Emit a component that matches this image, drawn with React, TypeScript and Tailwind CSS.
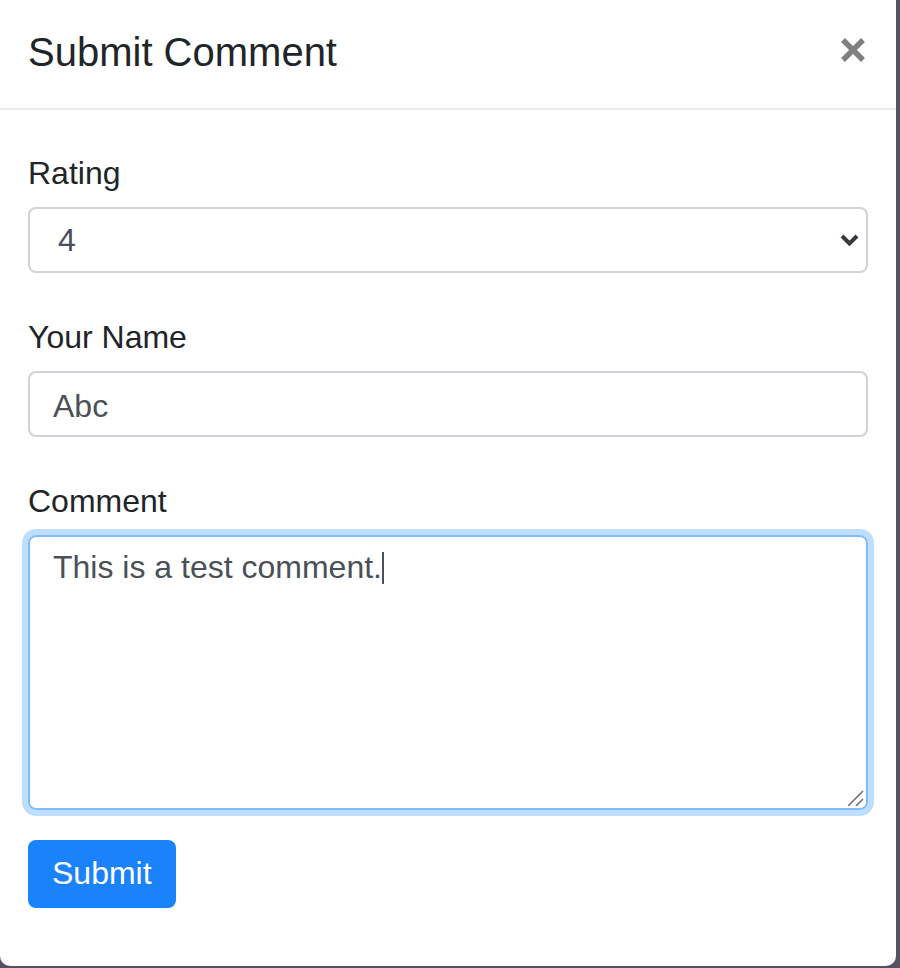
export default function App() {
  return (
    <div className="min-h-screen bg-[#54525e] font-['Liberation_Sans',Arial,sans-serif]">
      {/* Modal */}
      <div className="w-[896px] h-[966px] bg-white rounded-b-[10px] flex flex-col">
        {/* Header */}
        <div className="flex items-start justify-between pl-[28px] pr-[30px] pt-[22px] pb-[26px] border-b-2 border-[#e9ecef]">
          <h5 className="text-[40px] leading-[60px] text-[#212529] font-normal">Submit Comment</h5>
          <button className="mt-[15px] text-[#7f7f7f]" aria-label="Close">
            <svg width="26" height="26" viewBox="0 0 26 26">
              <path d="M3 3 L23 23 M23 3 L3 23" stroke="currentColor" strokeWidth="5.5" />
            </svg>
          </button>
        </div>

        {/* Body */}
        <div className="flex flex-col px-[28px] pt-[39px]">
          <label className="block text-[32px] leading-[48px] text-[#212529] mb-[10px]">Rating</label>
          <div className="relative">
            <select
              defaultValue="4"
              className="appearance-none w-full h-[66px] border-2 border-[#ced4da] rounded-[8px] pl-[28px] pr-[40px] text-[32px] text-[#495057] bg-white outline-none"
            >
              <option>1</option>
              <option>2</option>
              <option>3</option>
              <option>4</option>
              <option>5</option>
            </select>
            <svg
              className="absolute right-[9px] top-[27px] pointer-events-none"
              width="19"
              height="12"
              viewBox="0 0 19 12"
            >
              <polyline points="2,2 9.5,9.5 17,2" fill="none" stroke="#343a40" strokeWidth="4" />
            </svg>
          </div>

          <label className="block text-[32px] leading-[48px] text-[#212529] mt-[40px] mb-[10px]">Your Name</label>
          <input
            readOnly
            value="Abc"
            className="w-full h-[66px] border-2 border-[#ced4da] rounded-[8px] px-[23px] pt-[4px] text-[32px] text-[#495057] outline-none"
          />

          <label className="block text-[32px] leading-[48px] text-[#212529] mt-[40px] mb-[10px]">Comment</label>
          <div className="relative h-[275px] border-2 border-[#80bdff] rounded-[8px] shadow-[0_0_0_6px_#bfdeff] pt-[6px] px-[23px] text-[32px] leading-[48px] text-[#495057]">
            <span>This is a test comment.</span>
            <span className="inline-block w-[2px] h-[32px] bg-[#495057] align-[-6px]" />
            <svg className="absolute right-[2px] bottom-[2px]" width="16" height="16" viewBox="0 0 16 16">
              <path d="M0 16 L15 1 M8 16 L15 9" stroke="#6b6b6b" strokeWidth="1.5" />
            </svg>
          </div>

          <div className="mt-[30px]">
            <button className="h-[68px] px-[24px] pb-[2px] bg-[#1a82fb] text-white text-[32px] leading-[48px] rounded-[8px]">
              Submit
            </button>
          </div>
        </div>
      </div>
    </div>
  );
}
